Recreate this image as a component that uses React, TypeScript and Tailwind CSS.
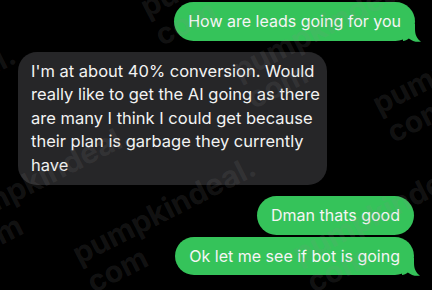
import React from 'react';

const green = 'bg-[#35c35a]';

function Tail({ color }: { color: string }) {
  return (
    <svg
      className="absolute right-[-6px] bottom-[-1px]"
      width="18"
      height="18"
      viewBox="0 0 18 18"
    >
      <path
        d="M0 0 H12 V5 C12 10.5 13.8 14.8 18 17.6 C13 18.3 8.8 16.8 5.8 14.4 C4 15.8 2 16.6 0 17 Z"
        fill={color}
      />
    </svg>
  );
}

function Sent({ text, tail, className = '' }: { text: string; tail?: boolean; className?: string }) {
  return (
    <div className={`relative ${green} rounded-[20px] px-[14px] py-[8px] text-[#f5f5f5] text-[16px] leading-[22.5px] whitespace-nowrap ${className}`}>
      {text}
      {tail && <Tail color="#35c35a" />}
    </div>
  );
}

const received = [
  "I'm at about 40% conversion. Would",
  'really like to get the AI going as there',
  'are many I think I could get because',
  'their plan is garbage they currently',
  'have',
];

// watermark positions: [left, top]
const marks: [string, string][] = [
  ['left-[-58px]', 'top-[-38px]'],
  ['left-[135px]', 'top-[-6px]'],
  ['left-[227px]', 'top-[57px]'],
  ['left-[367px]', 'top-[91px]'],
  ['left-[-173px]', 'top-[129px]'],
  ['left-[-58px]', 'top-[209px]'],
  ['left-[67px]', 'top-[241px]'],
  ['left-[287px]', 'top-[241px]'],
];

export default function App() {
  return (
    <div
      className="relative w-[432px] h-[290px] bg-black overflow-hidden"
      style={{ fontFamily: 'Inter, "Liberation Sans", sans-serif' }}
    >
      <div className="flex flex-col pt-[2px] pl-[18px] pr-[17px]">
        <div className="flex justify-end">
          <Sent text="How are leads going for you" tail />
        </div>

        <div className="mt-[11px] w-[309px] bg-[#262628] rounded-[19px] pl-[13px] pr-[10px] py-[8px] text-[#f3f3f3] text-[16.5px] leading-[23.6px] whitespace-nowrap">
          {received.map((l) => (
            <div key={l}>{l}</div>
          ))}
        </div>

        <div className="mt-[11px] flex flex-col items-end gap-[2px] pr-[1px]">
          <Sent text="Dman thats good" />
          <Sent text="Ok let me see if bot is going" tail />
        </div>
      </div>

      {marks.map(([l, t], i) => (
        <div
          key={i}
          className={`absolute ${l} ${t} pointer-events-none origin-top-left -rotate-[27deg] text-[30px] leading-[32px] font-bold text-[rgba(140,140,140,0.14)] whitespace-nowrap`}
        >
          <div>pumpkindeal.</div>
          <div>com</div>
        </div>
      ))}
    </div>
  );
}
